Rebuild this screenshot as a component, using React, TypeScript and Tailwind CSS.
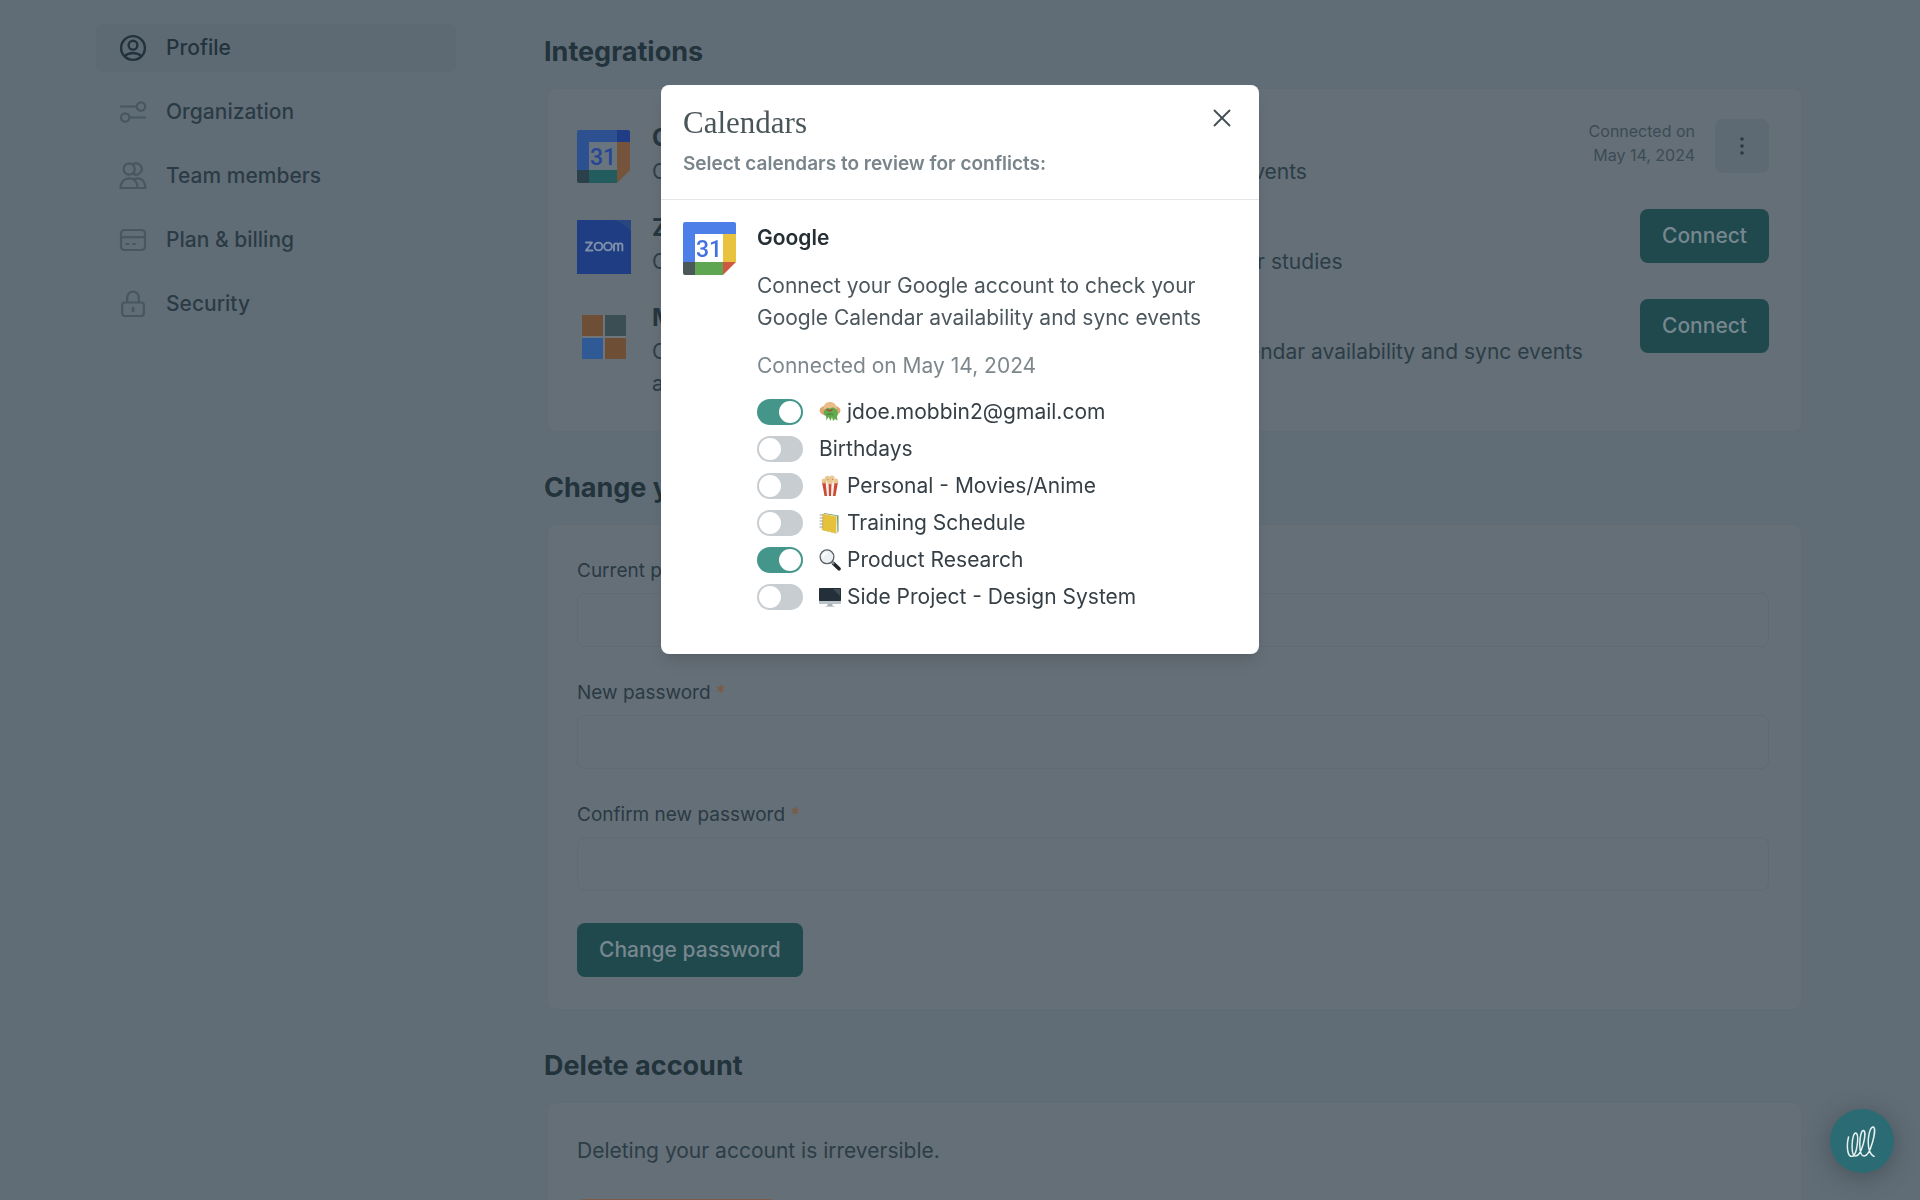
import React, { useState } from 'react';
import { X } from 'lucide-react';

interface IconProps {
  className?: string;
}

const ProfileIcon: React.FC<IconProps> = ({ className }) => (
  <svg className={className} viewBox="0 0 26 26" fill="none" stroke="currentColor" strokeWidth="2.400">
    <circle cx="13" cy="13" r="11.900" />
    <circle cx="13" cy="10.200" r="4.400" />
    <path d="M4.400 21.200c2.400-2.100 5.300-3.200 8.600-3.200s6.200 1.100 8.600 3.200" />
  </svg>
);

const OrganizationIcon: React.FC<IconProps> = ({ className }) => (
  <svg className={className} viewBox="0 0 26 26" fill="none" stroke="currentColor" strokeWidth="2.200" strokeLinecap="round">
    <path d="M1 7.500h15.500M9.500 18.500H25" />
    <circle cx="21" cy="7.500" r="4.200" />
    <circle cx="5.200" cy="18.500" r="4.200" />
  </svg>
);

const TeamIcon: React.FC<IconProps> = ({ className }) => (
  <svg className={className} viewBox="0 0 26 26" fill="none" stroke="currentColor" strokeWidth="2.200" strokeLinejoin="round">
    <circle cx="9.200" cy="6" r="5.600" />
    <path d="M13.200 1.200a5.600 5.600 0 1 1 0 9.600" />
    <path d="M0.500 25c0-5.600 3.800-9.600 8.900-9.600s8.200 4 8.200 9.600H.5Z" />
    <path d="M14 16.400c1.100-.7 2-1 3.300-1 4.900 0 8.200 4 8.200 9.600h-7.900" />
  </svg>
);

const BillingIcon: React.FC<IconProps> = ({ className }) => (
  <svg className={className} viewBox="0 0 26 26" fill="none" stroke="currentColor" strokeWidth="2.200">
    <rect x="1" y="3" width="24" height="20" rx="3.500" />
    <path d="M1 10.200h24" />
    <path d="M6.500 17h2M13 17h2" strokeLinecap="round" />
  </svg>
);

const SecurityIcon: React.FC<IconProps> = ({ className }) => (
  <svg className={className} viewBox="0 0 26 26" fill="none" stroke="currentColor" strokeWidth="2.200">
    <rect x="2.200" y="11.500" width="21.600" height="13.500" rx="2.500" />
    <path d="M7.200 11.500V6.500a5.800 5.800 0 0 1 11.600 0v5" />
    <path d="M13 17v3" strokeWidth="2.600" strokeLinecap="round" />
  </svg>
);

const ZoomLogo = () => (
  <svg className="size-[54px]" viewBox="0 0 54 54">
    <rect width="54" height="54" fill="#1e3d82" />
    <path d="M36 0h18v11C49 6 44 2 36 0Z" fill="#29477f" />
    <g fill="none" stroke="#7f90a8" strokeWidth="1.900" strokeLinecap="round" strokeLinejoin="round">
      <path d="M9 22.500h6L9 30.500h6.500" />
      <circle cx="21.500" cy="26.500" r="3.900" />
      <circle cx="31" cy="26.500" r="3.900" />
      <path d="M37 30.500v-5a2.100 2.100 0 0 1 4.200 0v5M41.200 25.500a2.100 2.100 0 0 1 4.200 0v5" />
    </g>
  </svg>
);

const MicrosoftLogo = () => (
  <svg className="size-[54px]" viewBox="0 0 54 54">
    <rect x="5" y="5" width="44" height="44" fill="#6f767b" />
    <rect x="5" y="5" width="21" height="21" fill="#6f4e36" />
    <rect x="28" y="5" width="21" height="21" fill="#3b4e54" />
    <rect x="5" y="28" width="21" height="21" fill="#305a96" />
    <rect x="28" y="28" width="21" height="21" fill="#6f4e36" />
  </svg>
);

const googlePalettes = {
  bright: { blue: '#4c80e8', corner: '#4c80e8', yellow: '#e9c340', red: '#cf5940', green: '#5fa653', dark: '#4b5759', page: '#ffffff', text: '#4172e0' },
  dimmed: { blue: '#2d5190', corner: '#1f3c84', yellow: '#75543b', red: '#75543b', green: '#235c5f', dark: '#2b404b', page: '#68757f', text: '#264694' },
};

const GoogleLogo: React.FC<{ palette: keyof typeof googlePalettes }> = ({ palette }) => {
  const c = googlePalettes[palette];
  return (
    <svg className="size-[53px]" viewBox="0 0 53 53">
      <path d="M2 0h38v12H12v29H0V2a2 2 0 0 1 2-2Z" fill={c.blue} />
      <path d="M40 0h11a2 2 0 0 1 2 2v10H40Z" fill={c.corner} />
      <path d="M40 12h13v28H40Z" fill={c.yellow} />
      <path d="M40 40h13L40 53Z" fill={c.red} />
      <path d="M12 40h28v13H12Z" fill={c.green} />
      <path d="M0 40h12v13H2a2 2 0 0 1-2-2Z" fill={c.dark} />
      <rect x="12" y="12" width="28" height="28" fill={c.page} />
      <text x="26" y="35" textAnchor="middle" fontSize="23" fontWeight="500" fontFamily="Roboto, sans-serif" fill={c.text}>31</text>
    </svg>
  );
};

const TrollEmoji = () => (
  <svg className="size-[22px]" viewBox="0 0 22 22">
    <ellipse cx="11" cy="9.500" rx="10.500" ry="5.500" fill="#dda673" />
    <path d="M4.500 8c0-4.500 2.500-7 6.500-7s6.500 2.500 6.500 7Z" fill="#e8bd88" />
    <path d="M5.500 9C8 6.500 10 6.500 11 7.500c2-1.500 4.500-1 5.500.5 2.500 1 3 5 1.500 7.500l.5 4-2.500-1.500L14 20l-1-4-1.500 4-2-4-2 3.500-.5-4.500c-2.500-1-3-4-1.500-6Z" fill="#63aa4e" />
    <path d="M7 7.500l3.500 1.500 4-1.500-2 2.500-1.500.5-2.500-.5Z" fill="#a74934" />
    <path d="M8 14c2-1.500 4-1.500 6 0" stroke="#3d7a3a" fill="none" />
  </svg>
);

const PopcornEmoji = () => (
  <svg className="size-[22px]" viewBox="0 0 22 22">
    <path d="M3 7l2.500 14h11L19 7Z" fill="#cb4a35" />
    <path d="M6.500 7l1.500 14h2L9.500 7ZM12.500 7L12 21h2l1.500-14Z" fill="#f5eeea" />
    <g fill="#eac893">
      <circle cx="5" cy="6" r="2.400" />
      <circle cx="8.500" cy="3.500" r="2.700" />
      <circle cx="13" cy="3" r="2.600" />
      <circle cx="16.800" cy="6" r="2.500" />
      <circle cx="11" cy="6.500" r="2.800" />
    </g>
    <g fill="#c98a52">
      <circle cx="9" cy="4.500" r="0.700" />
      <circle cx="13.500" cy="4.500" r="0.700" />
      <circle cx="6" cy="7" r="0.600" />
    </g>
  </svg>
);

const LedgerEmoji = () => (
  <svg className="size-[22px]" viewBox="0 0 22 22">
    <path d="M5 1l14.500 2.500v16L17 21.500 3.500 18Z" fill="#6f9a69" />
    <path d="M4 1.500l14 2.500.5 16L17 21.500 3.500 18Z" fill="#f1ead2" />
    <path d="M3.500 1.800l14 3-.7 16.500-14-3.300Z" fill="#e6c13c" />
    <path d="M1 3h3M1 6h3M1 9h3M1 12h3M.8 15h3" stroke="#9ba0a0" strokeLinecap="round" />
  </svg>
);

const SearchEmoji = () => (
  <svg className="size-[22px]" viewBox="0 0 22 22">
    <path d="M14.500 14.500l5.500 5.300" stroke="#232729" strokeWidth="3.600" strokeLinecap="round" />
    <path d="M12.500 12.500l2.500 2.500" stroke="#8e9599" strokeWidth="2" />
    <circle cx="8" cy="7.800" r="6.900" fill="#edf1f4" stroke="#5a6165" strokeWidth="1.300" />
    <path d="M4.500 7.500A4 4 0 0 1 8 3.800" stroke="#ffffff" strokeWidth="1.400" fill="none" strokeLinecap="round" />
  </svg>
);

const DesktopEmoji = () => (
  <svg className="size-[22px]" viewBox="0 0 22 22">
    <path d="M8.500 17h5v3.500h-5Z" fill="#aab1b6" />
    <path d="M6.500 20h9v1h-9Z" fill="#c9ced2" />
    <rect x="0" y="2" width="22" height="16" rx="0.800" fill="#bcc3c8" />
    <rect x="0" y="2" width="22" height="13" rx="0.800" fill="#23303a" />
    <path d="M14 3h7v7Z" fill="#3e4b55" />
  </svg>
);

const navItems = [
  { label: 'Profile', icon: ProfileIcon, active: true },
  { label: 'Organization', icon: OrganizationIcon, active: false },
  { label: 'Team members', icon: TeamIcon, active: false },
  { label: 'Plan & billing', icon: BillingIcon, active: false },
  { label: 'Security', icon: SecurityIcon, active: false },
];

const initialCalendars = [
  { id: 'primary', label: 'jdoe.mobbin2@gmail.com', emoji: TrollEmoji, enabled: true },
  { id: 'birthdays', label: 'Birthdays', emoji: null, enabled: false },
  { id: 'movies', label: 'Personal - Movies/Anime', emoji: PopcornEmoji, enabled: false },
  { id: 'training', label: 'Training Schedule', emoji: LedgerEmoji, enabled: false },
  { id: 'research', label: 'Product Research', emoji: SearchEmoji, enabled: true },
  { id: 'side-project', label: 'Side Project - Design System', emoji: DesktopEmoji, enabled: false },
];

const passwordFields = [
  { id: 'current-password', label: 'Current password' },
  { id: 'new-password', label: 'New password' },
  { id: 'confirm-password', label: 'Confirm new password' },
];

interface IntegrationProps {
  logo: React.ReactNode;
  title: string;
  description: string;
  children: React.ReactNode;
}

const Integration: React.FC<IntegrationProps> = ({ logo, title, description, children }) => (
  <div className="flex items-start gap-[21px]">
    <div className="mt-[11px] size-[54px] shrink-0">{logo}</div>
    <div className="min-w-0 flex-1 pt-[3px]">
      <h3 className="text-[24px] leading-8 font-bold text-[#26363f]">{title}</h3>
      <p className="mt-[2px] leading-8 text-[#2c3d47]">{description}</p>
    </div>
    {children}
  </div>
);

const ConnectButton = () => (
  <button type="button" className="h-[54px] shrink-0 rounded-lg bg-[#20494d] px-[22px] font-medium text-[#77878f]">
    Connect
  </button>
);

const Sidebar = () => (
  <nav className="flex w-[360px] shrink-0 flex-col gap-4 pt-6">
    {navItems.map(({ label, icon: Icon, active }) => (
      <a
        key={label}
        href="#"
        className={
          active
            ? 'flex h-12 items-center gap-5 rounded-lg bg-[#5e6a73] px-6 font-medium text-[#22333d]'
            : 'flex h-12 items-center gap-5 rounded-lg px-6 font-medium text-[#2b3b45]'
        }
      >
        <Icon className={active ? 'size-[26px] overflow-visible' : 'size-[26px] overflow-visible text-[#47565f]'} />
        {label}
      </a>
    ))}
  </nav>
);

const CalendarsDialog = () => {
  const [calendars, setCalendars] = useState(initialCalendars);

  const toggle = (id: string) => {
    setCalendars((prev) => prev.map((c) => (c.id === id ? { ...c, enabled: !c.enabled } : c)));
  };

  return (
    <div className="fixed inset-0 flex items-start justify-center pt-[85px]">
      <div role="dialog" aria-labelledby="calendars-title" className="w-[598px] rounded-lg bg-white shadow-lg">
        <header className="flex items-start justify-between border-b border-[#e4e7e9] px-[22px] pt-[18px] pb-[19px]">
          <div>
            <h2 id="calendars-title" className="font-['Liberation_Serif',serif] text-[31px] leading-10 text-[#4a5559]">
              Calendars
            </h2>
            <p className="mt-[5px] text-[19px] leading-8 font-semibold text-[#7a858b]">Select calendars to review for conflicts:</p>
          </div>
          <button type="button" aria-label="Close" className="text-[#465157]">
            <X className="size-[30px]" strokeWidth={1.5} />
          </button>
        </header>

        <div className="flex items-start gap-[21px] px-[22px] pt-[22px] pb-[41px]">
          <div className="size-[53px] shrink-0">
            <GoogleLogo palette="bright" />
          </div>
          <div className="min-w-0 flex-1">
            <h3 className="leading-8 font-semibold text-[#252f34]">Google</h3>
            <p className="mt-4 leading-8 text-[#4c575d]">
              Connect your Google account to check your Google Calendar availability and sync events
            </p>
            <p className="mt-4 leading-8 text-[#7d878c]">Connected on May 14, 2024</p>
            <ul className="mt-[14px] flex flex-col gap-[5px]">
              {calendars.map(({ id, label, emoji: Emoji, enabled }) => (
                <li key={id}>
                  <label className="flex h-8 cursor-pointer items-center gap-4 text-[#353f45]">
                    <input
                      type="checkbox"
                      role="switch"
                      checked={enabled}
                      onChange={() => toggle(id)}
                      className="h-[26px] w-[46px] shrink-0 cursor-pointer appearance-none rounded-full bg-[#c8cdd2] p-[2px] before:block before:size-[22px] before:rounded-full before:bg-white checked:bg-[#44968b] checked:before:ml-5"
                    />
                    <span className="flex items-center gap-[6px]">
                      {Emoji && <Emoji />}
                      {label}
                    </span>
                  </label>
                </li>
              ))}
            </ul>
          </div>
        </div>
      </div>
    </div>
  );
};

const App: React.FC = () => {
  return (
    <div className="h-screen overflow-hidden bg-[#616d76] font-['Inter',sans-serif] text-[21px]">
      <div className="flex gap-[88px] pr-[118px] pl-24">
        <Sidebar />

        <main className="min-w-0 flex-1 pt-8">
          <section>
            <h2 className="text-[27px] leading-10 font-bold text-[#22333c]">Integrations</h2>
            <div className="mt-4 ml-[3px] flex flex-col gap-[21px] rounded-lg border border-[#606b74] bg-[#656f77] pt-[30px] pr-8 pb-[31px] pl-[29px]">
              <Integration
                logo={<GoogleLogo palette="dimmed" />}
                title="Google Calendar"
                description="Connect your Google Calendar, check availability and sync events"
              >
                <div className="flex items-start gap-5">
                  <p className="text-right text-base leading-6 text-[#3b4b55]">
                    Connected on
                    <br />
                    May 14, 2024
                  </p>
                  <button type="button" aria-label="More options" className="flex size-[54px] items-center justify-center rounded-lg bg-[#5e6a73]">
                    <svg className="h-5 w-1" viewBox="0 0 4 20" fill="#2a3a44">
                      <circle cx="2" cy="3" r="1.800" />
                      <circle cx="2" cy="10" r="1.800" />
                      <circle cx="2" cy="17" r="1.800" />
                    </svg>
                  </button>
                </div>
              </Integration>
              <Integration
                logo={<ZoomLogo />}
                title="Zoom"
                description="Create and add unique Zoom video links automatically to your studies"
              >
                <ConnectButton />
              </Integration>
              <Integration
                logo={<MicrosoftLogo />}
                title="Microsoft"
                description="Connect your Microsoft account to check your Microsoft calendar availability and sync events and more"
              >
                <ConnectButton />
              </Integration>
            </div>
          </section>

          <section className="mt-9">
            <h2 className="text-[27px] leading-10 font-bold text-[#22333c]">Change your password</h2>
            <form className="mt-4 ml-[3px] rounded-lg border border-[#606b74] bg-[#656f77] pt-8 pr-8 pb-8 pl-[29px]">
              {passwordFields.map(({ id, label }) => (
                <div key={id} className="mb-8">
                  <label htmlFor={id} className="block text-[19px] leading-7 text-[#2a3a44]">
                    {label} <span className="font-medium text-[#7b5a43]">*</span>
                  </label>
                  <input
                    id={id}
                    type="password"
                    className="mt-2 block h-[54px] w-full rounded-lg border border-[#5f6a73] bg-transparent px-4 outline-none"
                  />
                </div>
              ))}
              <button type="button" className="h-[54px] rounded-lg bg-[#20494d] px-[22px] font-medium text-[#77878f]">
                Change password
              </button>
            </form>
          </section>

          <section className="mt-9">
            <h2 className="text-[27px] leading-10 font-bold text-[#22333c]">Delete account</h2>
            <div className="mt-4 ml-[3px] rounded-lg border border-[#606b74] bg-[#656f77] pt-8 pr-8 pb-8 pl-[29px]">
              <p className="leading-8 text-[#2c3d47]">Deleting your account is irreversible.</p>
              <button type="button" className="mt-8 h-[54px] rounded-lg bg-[#7d5a45] px-6 font-medium text-[#8a8f94]">
                Delete account
              </button>
            </div>
          </section>
        </main>
      </div>

      <CalendarsDialog />

      <button
        type="button"
        aria-label="Open help"
        className="fixed right-[26px] bottom-[27px] flex size-16 items-center justify-center rounded-full bg-[#2b6c74] shadow-[0_4px_24px_rgba(40,50,58,0.45)]"
      >
        <svg className="size-8" viewBox="0 0 32 32" fill="none" stroke="#e6f0f1" strokeWidth="1.500" strokeLinecap="round">
          <path d="M2.500 12C.5 20 1 32 6 31.500c5-.5 7.500-22 3.800-23.500C6 7 4 30.500 9.500 31c6 .5 12-24 8-25.500-4-1-6 25 .5 25.500s13-27.500 9.500-29c-5-1.500-9 24 .5 29.500" />
        </svg>
      </button>
    </div>
  );
};

export default App;
